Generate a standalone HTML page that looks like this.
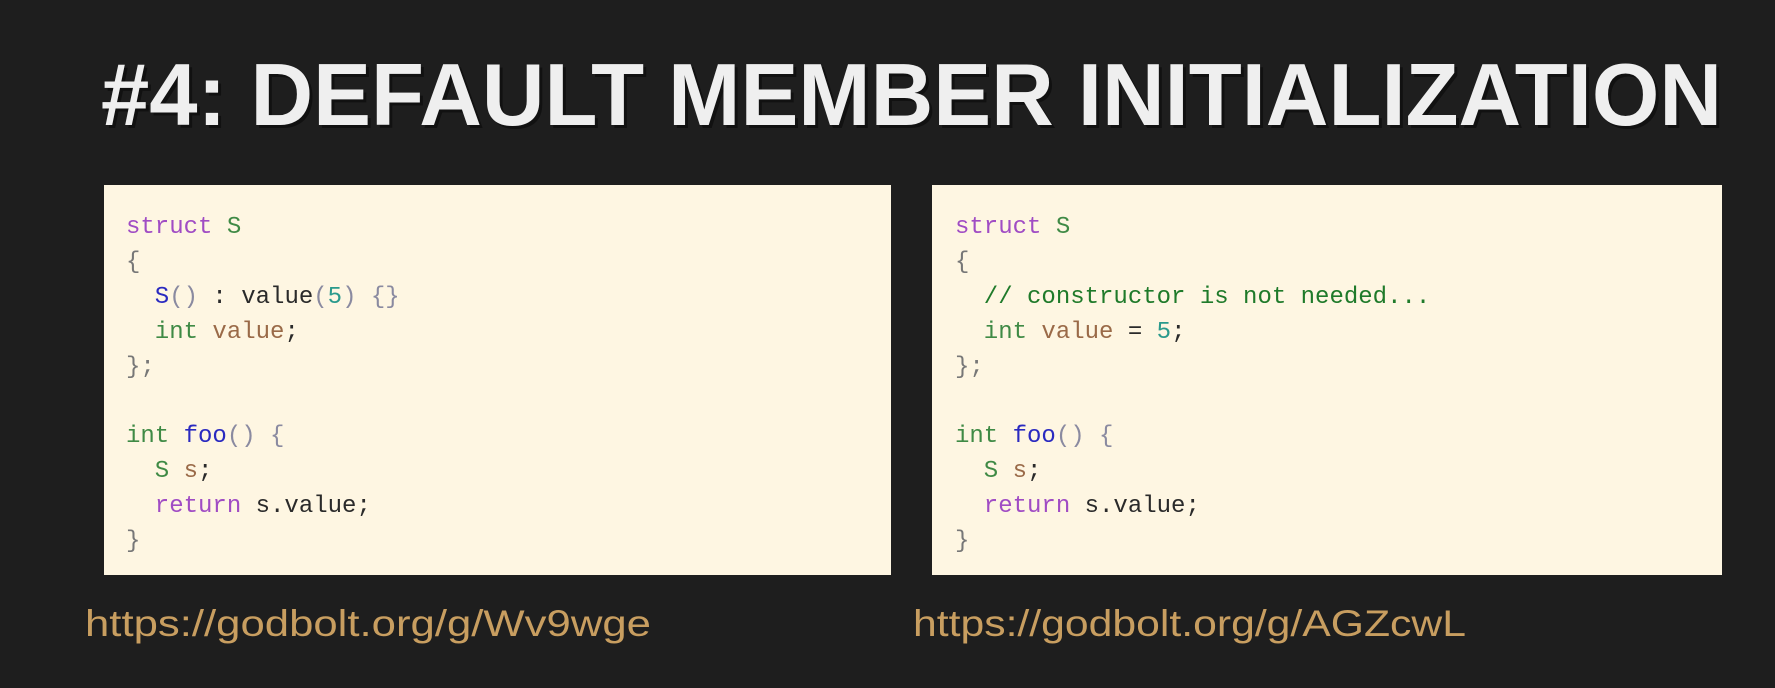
<!DOCTYPE html>
<html><head><meta charset="utf-8"><style>
html,body{margin:0;padding:0;background:#1e1e1e;width:1775px;height:688px;overflow:hidden}
svg{display:block}
.c{font-family:"Liberation Mono","DejaVu Sans Mono",monospace;font-size:24px}
.k{fill:#a04cc4}.t{fill:#3f8a45}.f{fill:#2a2ac0}.v{fill:#9a6a48}.n{fill:#2a9a8c}.p{fill:#8a8aa0}.d{fill:#2a2a2a}.g{fill:#1f7a2a}.b{fill:#777}
</style></head><body>
<svg width="1775" height="688" xmlns="http://www.w3.org/2000/svg">
<rect width="1775" height="688" fill="#1e1e1e"/>
<text x="101" y="125" font-family="Liberation Sans,sans-serif" font-weight="bold" font-size="88" fill="#111" textLength="1621" lengthAdjust="spacingAndGlyphs" transform="translate(3,3)">#4: DEFAULT MEMBER INITIALIZATION</text>
<text x="101" y="125" font-family="Liberation Sans,sans-serif" font-weight="bold" font-size="88" fill="#efefef" textLength="1621" lengthAdjust="spacingAndGlyphs">#4: DEFAULT MEMBER INITIALIZATION</text>
<rect x="104" y="185" width="787" height="390" fill="#fef6e2"/>
<rect x="932" y="185" width="790" height="390" fill="#fef6e2"/>
<g class="c">
<text x="126" y="233"><tspan class="k">struct</tspan><tspan class="t"> S</tspan></text>
<text x="126" y="268" class="b">{</text>
<text x="126" y="303" xml:space="preserve"><tspan class="f">  S</tspan><tspan class="p">()</tspan><tspan class="d"> : value</tspan><tspan class="p">(</tspan><tspan class="n">5</tspan><tspan class="p">) {}</tspan></text>
<text x="126" y="338" xml:space="preserve"><tspan class="t">  int</tspan><tspan class="v"> value</tspan><tspan class="d">;</tspan></text>
<text x="126" y="373" class="b">};</text>
<text x="126" y="442"><tspan class="t">int</tspan><tspan class="f"> foo</tspan><tspan class="p">() {</tspan></text>
<text x="126" y="477" xml:space="preserve"><tspan class="t">  S</tspan><tspan class="v"> s</tspan><tspan class="d">;</tspan></text>
<text x="126" y="512" xml:space="preserve"><tspan class="k">  return</tspan><tspan class="d"> s.value;</tspan></text>
<text x="126" y="547" class="b">}</text>

<text x="955" y="233"><tspan class="k">struct</tspan><tspan class="t"> S</tspan></text>
<text x="955" y="268" class="b">{</text>
<text x="955" y="303" xml:space="preserve" class="g">  // constructor is not needed...</text>
<text x="955" y="338" xml:space="preserve"><tspan class="t">  int</tspan><tspan class="v"> value</tspan><tspan class="d"> = </tspan><tspan class="n">5</tspan><tspan class="d">;</tspan></text>
<text x="955" y="373" class="b">};</text>
<text x="955" y="442"><tspan class="t">int</tspan><tspan class="f"> foo</tspan><tspan class="p">() {</tspan></text>
<text x="955" y="477" xml:space="preserve"><tspan class="t">  S</tspan><tspan class="v"> s</tspan><tspan class="d">;</tspan></text>
<text x="955" y="512" xml:space="preserve"><tspan class="k">  return</tspan><tspan class="d"> s.value;</tspan></text>
<text x="955" y="547" class="b">}</text>
</g>
<text x="85" y="636" font-family="Liberation Sans,sans-serif" font-size="37" fill="#c89e60" textLength="566" lengthAdjust="spacingAndGlyphs">https://godbolt.org/g/Wv9wge</text>
<text x="913" y="636" font-family="Liberation Sans,sans-serif" font-size="37" fill="#c89e60" textLength="553" lengthAdjust="spacingAndGlyphs">https://godbolt.org/g/AGZcwL</text>
</svg>
</body></html>
